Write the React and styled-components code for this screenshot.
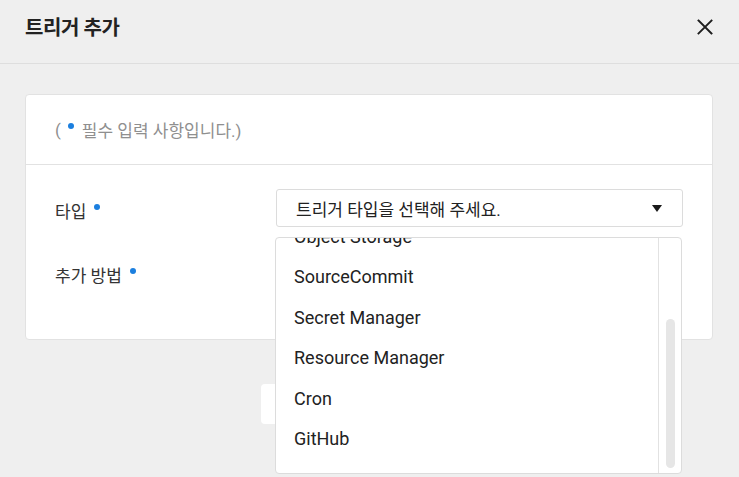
import React from "react";
import styled, { createGlobalStyle } from "styled-components";

const GlobalStyle = createGlobalStyle`
  html, body {
    margin: 0;
    padding: 0;
    background: #efefef;
    font-family: Roboto, "Noto Sans CJK KR", sans-serif;
    color: #222;
  }
  * { box-sizing: border-box; }
`;

const Modal = styled.div`
  display: flex;
  flex-direction: column;
  width: 739px;
  min-height: 477px;
  overflow: hidden;
`;

const Header = styled.header`
  height: 64px;
  padding: 0 22px 0 25px;
  display: flex;
  align-items: center;
  justify-content: space-between;
  border-bottom: 1px solid #dedede;
`;

const Title = styled.h1`
  margin: 0 0 10px;
  font-size: 20px;
  font-weight: 700;
  color: #222;
  letter-spacing: -0.4px;
`;

const CloseButton = styled.button`
  width: 24px;
  height: 24px;
  margin: 0 0 10px;
  padding: 0;
  border: 0;
  background: transparent;
  display: flex;
  align-items: center;
  justify-content: center;
`;

const Body = styled.div`
  padding: 30px 26px 0 25px;
`;

const Card = styled.section`
  background: #fff;
  border: 1px solid #e2e2e2;
  border-radius: 4px;
`;

const Notice = styled.p`
  margin: 0;
  height: 70px;
  padding: 0 29px;
  display: flex;
  align-items: center;
  font-size: 17px;
  color: #8f8f8f;
  border-bottom: 1px solid #e2e2e2;
`;

const Dot = styled.span`
  display: inline-block;
  width: 6px;
  height: 6px;
  border-radius: 50%;
  background: #1b7fdf;
  margin: 0 ${(p) => p.$right}px 8px ${(p) => p.$left}px;
  align-self: center;
`;

const Form = styled.div`
  padding: 24px 29px 48px;
  display: flex;
  flex-direction: column;
  gap: 26px;
`;

const Row = styled.div`
  display: grid;
  grid-template-columns: 221px 1fr;
  align-items: center;
  min-height: 38px;
`;

const Label = styled.div`
  display: flex;
  align-items: center;
  font-size: 17px;
  color: #333;
  padding-top: 5px;
`;

const SelectWrap = styled.div`
  position: relative;
`;

const SelectBox = styled.div`
  height: 38px;
  border: 1px solid #dcdcdc;
  border-radius: 3px;
  background: #fff;
  padding: 0 19px;
  display: flex;
  align-items: center;
  justify-content: space-between;
  font-size: 17px;
  color: #222;
`;

const Caret = styled.span`
  width: 0;
  height: 0;
  border-left: 5.5px solid transparent;
  border-right: 5.5px solid transparent;
  border-top: 7px solid #1a1a1a;
  margin-right: 1px;
`;

const Dropdown = styled.div`
  position: absolute;
  top: calc(100% + 10px);
  left: -1px;
  width: 407px;
  height: 237px;
  background: #fff;
  border: 1px solid #dcdcdc;
  border-radius: 4px;
  display: flex;
  overflow: hidden;
  z-index: 10;
`;

const Options = styled.ul`
  flex: 1;
  margin: 0;
  padding: 0 0 14px;
  list-style: none;
  display: flex;
  flex-direction: column;
  justify-content: flex-end;
  overflow: hidden;
`;

const Option = styled.li`
  flex: none;
  height: 40.5px;
  padding: 0 18px;
  display: flex;
  align-items: center;
  font-size: 18px;
  color: #222;
`;

const ScrollTrack = styled.div`
  width: 23px;
  border-left: 1px solid #e2e2e2;
  display: flex;
  flex-direction: column;
  justify-content: flex-end;
  align-items: center;
  padding-bottom: 5px;
`;

const ScrollThumb = styled.div`
  width: 9px;
  height: 149px;
  border-radius: 5px;
  background: #e6e6e6;
`;

const Footer = styled.div`
  margin-top: 44px;
  display: flex;
  justify-content: center;
  gap: 16px;
`;

const Button = styled.button`
  width: 100px;
  height: 40px;
  border: 0;
  border-radius: 4px;
  background: #fff;
  font-family: inherit;
  font-size: 15px;
  color: #333;
`;

const options = [
  "API Gateway",
  "Cloud Insight",
  "Cloud Log Analytics",
  "Object Storage",
  "SourceCommit",
  "Secret Manager",
  "Resource Manager",
  "Cron",
  "GitHub",
];

export default function App() {
  return (
    <>
      <GlobalStyle />
      <Modal>
        <Header>
          <Title>트리거 추가</Title>
          <CloseButton aria-label="닫기">
            <svg width="16" height="16" viewBox="0 0 16 16">
              <path d="M1.5 1.5 L14.5 14.5 M14.5 1.5 L1.5 14.5" stroke="#1e1e1e" strokeWidth="1.9" strokeLinecap="square" fill="none" />
            </svg>
          </CloseButton>
        </Header>
        <Body>
          <Card>
            <Notice>
              (<Dot $left={7} $right={8} />필수 입력 사항입니다.)
            </Notice>
            <Form>
              <Row>
                <Label>
                  타입<Dot $left={8} $right={0} />
                </Label>
                <SelectWrap>
                  <SelectBox>
                    트리거 타입을 선택해 주세요.
                    <Caret />
                  </SelectBox>
                  <Dropdown>
                    <Options>
                      {options.map((o) => (
                        <Option key={o}>{o}</Option>
                      ))}
                    </Options>
                    <ScrollTrack>
                      <ScrollThumb />
                    </ScrollTrack>
                  </Dropdown>
                </SelectWrap>
              </Row>
              <Row>
                <Label>
                  추가 방법<Dot $left={8} $right={0} />
                </Label>
                <div />
              </Row>
            </Form>
          </Card>
          <Footer>
            <Button>취소</Button>
            <Button>추가</Button>
          </Footer>
        </Body>
      </Modal>
    </>
  );
}
